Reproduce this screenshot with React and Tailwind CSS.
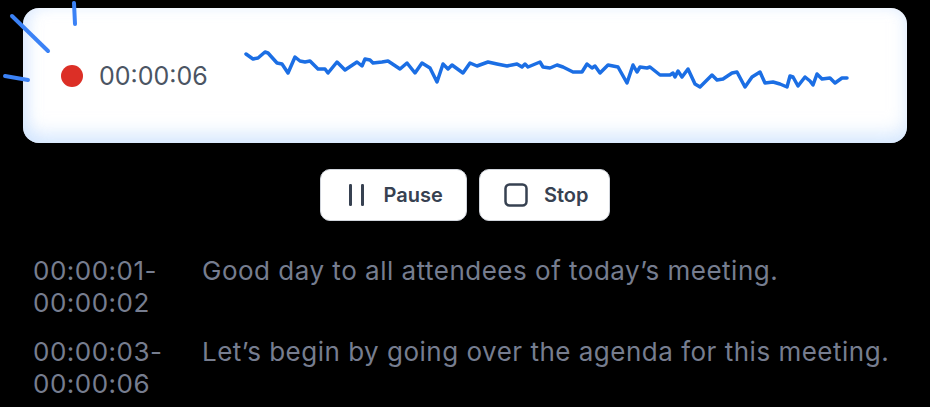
import React from 'react';

const wave = [
  [246, 54], [253, 59], [258, 58], [265, 52], [268, 53], [277, 63], [282, 64], [288, 73],
  [295, 57], [300, 61], [305, 62], [310, 61], [318, 69], [325, 69], [328, 73], [337, 62],
  [345, 70], [357, 62], [362, 66], [365, 59], [370, 60], [373, 63], [382, 62], [388, 61],
  [400, 69], [407, 63], [415, 73], [422, 63], [430, 68], [437, 82], [443, 64], [448, 69],
  [452, 65], [463, 73], [470, 63], [477, 66], [488, 62], [497, 64], [507, 66], [517, 64],
  [522, 67], [525, 64], [528, 67], [540, 62], [543, 67], [550, 68], [557, 65], [563, 67],
  [573, 72], [582, 72], [587, 64], [592, 68], [595, 66], [600, 73], [608, 65], [618, 67],
  [627, 83], [633, 65], [637, 72], [640, 67], [647, 68], [650, 67], [660, 75], [670, 75],
  [673, 73], [675, 77], [678, 71], [682, 77], [688, 69], [695, 84], [700, 87], [707, 80],
  [712, 75], [717, 80], [723, 79], [732, 73], [737, 72], [745, 87], [752, 77], [760, 72],
  [765, 83], [773, 82], [780, 84], [787, 87], [790, 76], [793, 77], [798, 86], [805, 77],
  [810, 81], [813, 85], [817, 74], [822, 79], [830, 78], [835, 83], [842, 78], [847, 78],
]
  .map(([x, y]) => `${x},${y}`)
  .join(' ');

const transcript = [
  { time: '00:00:01-00:00:02', text: 'Good day to all attendees of today\u2019s meeting.' },
  { time: '00:00:03-00:00:06', text: 'Let\u2019s begin by going over the agenda for this meeting.' },
];

const App = () => {
  return (
    <div className="relative min-h-screen bg-black pt-2 font-['Inter',sans-serif]">
      {/* Recording card */}
      <div className="mx-[23px] flex h-[135px] items-center rounded-2xl bg-white pl-[38px] shadow-[inset_0_-10px_18px_rgba(191,219,254,0.55),inset_6px_0_14px_rgba(191,219,254,0.35)]">
        <div className="h-[22px] w-[22px] shrink-0 rounded-full bg-[#dc2f26]"></div>
        <span className="ml-4 mt-[2px] text-[25px] text-[#4b5563]">00:00:06</span>
        <svg className="ml-auto mr-[55px]" width="610" height="135" viewBox="242 8 610 135">
          <polyline
            points={wave}
            fill="none"
            stroke="#1b6ee4"
            strokeWidth="3.5"
            strokeLinejoin="round"
            strokeLinecap="round"
          />
        </svg>
      </div>

      {/* Recording sparkle lines */}
      <svg className="absolute left-0 top-0" width="90" height="90" viewBox="0 0 90 90">
        <g stroke="#3b82f6" strokeWidth="4" strokeLinecap="round">
          <line x1="74" y1="3" x2="75" y2="24" />
          <line x1="12" y1="16" x2="48" y2="51" />
          <line x1="5" y1="76" x2="28" y2="80" />
        </g>
      </svg>

      {/* Controls */}
      <div className="mt-[26px] flex justify-center gap-3">
        <button className="flex h-[52px] items-center gap-[19px] rounded-[10px] border border-gray-300 bg-white pl-[26px] pr-[23px] text-[20px] font-semibold text-[#374151]">
          <svg width="18" height="24" viewBox="0 0 18 24">
            <rect x="2" y="1" width="3" height="22" rx="1.2" fill="#374151" />
            <rect x="14" y="1" width="3" height="22" rx="1.2" fill="#374151" />
          </svg>
          Pause
        </button>
        <button className="flex h-[52px] items-center gap-[16px] rounded-[10px] border border-gray-300 bg-white pl-6 pr-[21px] text-[20px] font-semibold text-[#374151]">
          <svg width="24" height="24" viewBox="0 0 24 24">
            <rect x="1.5" y="1.5" width="21" height="21" rx="4" fill="none" stroke="#374151" strokeWidth="2.5" />
          </svg>
          Stop
        </button>
      </div>

      {/* Transcript */}
      <div className="mt-[34px] flex flex-col gap-[17px] pl-[33px]">
        {transcript.map((row) => (
          <div
            key={row.time}
            className="grid grid-cols-[169px_1fr] text-[26px] leading-[32px] tracking-[0.5px] text-[#767d8f]"
          >
            <span className="pr-4">{row.time}</span>
            <span>{row.text}</span>
          </div>
        ))}
      </div>
    </div>
  );
};

export default App;
